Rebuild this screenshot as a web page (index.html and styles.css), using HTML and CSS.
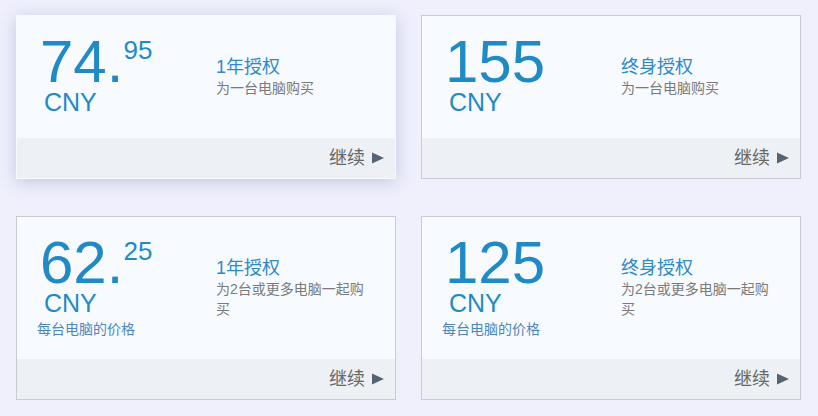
FILE: index.html
```html
<!DOCTYPE html>
<html lang="zh-CN">
<head>
<meta charset="utf-8">
<title>授权</title>
<link rel="stylesheet" href="styles.css">
</head>
<body>
<div class="grid">
  <div class="card card-active">
    <div class="main">
      <div class="price">
        <div class="amount"><span class="num">74.</span><span class="cents">95</span></div>
        <div class="cur">CNY</div>
      </div>
      <div class="desc">
        <div class="title">1年授权</div>
        <div class="sub">为一台电脑购买</div>
      </div>
    </div>
    <div class="foot"><span class="next">继续</span><svg class="tri" width="12" height="12" viewBox="0 0 12 12"><polygon points="0,0.5 12,6 0,11.5" fill="#556373"/></svg></div>
  </div>
  <div class="card">
    <div class="main">
      <div class="price">
        <div class="amount"><span class="num">155</span></div>
        <div class="cur">CNY</div>
      </div>
      <div class="desc">
        <div class="title">终身授权</div>
        <div class="sub">为一台电脑购买</div>
      </div>
    </div>
    <div class="foot"><span class="next">继续</span><svg class="tri" width="12" height="12" viewBox="0 0 12 12"><polygon points="0,0.5 12,6 0,11.5" fill="#556373"/></svg></div>
  </div>
  <div class="card">
    <div class="main">
      <div class="price">
        <div class="amount"><span class="num">62.</span><span class="cents">25</span></div>
        <div class="cur">CNY</div>
        <div class="each">每台电脑的价格</div>
      </div>
      <div class="desc">
        <div class="title">1年授权</div>
        <div class="sub">为2台或更多电脑一起购买</div>
      </div>
    </div>
    <div class="foot"><span class="next">继续</span><svg class="tri" width="12" height="12" viewBox="0 0 12 12"><polygon points="0,0.5 12,6 0,11.5" fill="#556373"/></svg></div>
  </div>
  <div class="card">
    <div class="main">
      <div class="price">
        <div class="amount"><span class="num">125</span></div>
        <div class="cur">CNY</div>
        <div class="each">每台电脑的价格</div>
      </div>
      <div class="desc">
        <div class="title">终身授权</div>
        <div class="sub">为2台或更多电脑一起购买</div>
      </div>
    </div>
    <div class="foot"><span class="next">继续</span><svg class="tri" width="12" height="12" viewBox="0 0 12 12"><polygon points="0,0.5 12,6 0,11.5" fill="#556373"/></svg></div>
  </div>
</div>
</body>
</html>
```

FILE: styles.css
```css
html, body {
  margin: 0;
  padding: 0;
  background: #eff0fc;
}
body {
  font-family: "Liberation Sans", "Noto Sans CJK SC", sans-serif;
}
.grid {
  display: grid;
  grid-template-columns: 380px 380px;
  column-gap: 25px;
  row-gap: 37px;
  padding: 15px 0 0 16px;
  align-items: stretch;
}
.card {
  display: flex;
  flex-direction: column;
  background: #f7fbff;
  border: 1px solid #c8cad4;
}
.card-active {
  border-color: #f7fbff;
  box-shadow: 0 3px 16px rgba(110, 112, 160, 0.32);
}
.main {
  flex: 1;
  display: grid;
  grid-template-columns: 179px 1fr;
  padding: 18px 20px 20px 20px;
}
.price {
  color: #1f8ac6;
}
.amount {
  display: flex;
  align-items: flex-start;
  margin-left: 3px;
}
.num {
  font-size: 60px;
  line-height: 56px;
}
.cents {
  font-size: 26px;
  line-height: 26px;
  margin-top: 3px;
}
.cur {
  font-size: 25px;
  line-height: 24px;
  margin: 0 0 4px 7px;
}
.each {
  font-size: 14px;
  line-height: 20px;
  margin-top: 1px;
  color: #4c86bb;
}
.desc {
  margin-top: 22px;
}
.title {
  font-size: 18px;
  line-height: 22px;
  color: #2f89c7;
}
.sub {
  font-size: 14px;
  line-height: 20px;
  color: #7a7a7a;
}
.foot {
  height: 40px;
  background: #edf1f5;
  display: flex;
  align-items: center;
  justify-content: flex-end;
  padding: 0 11px 0 0;
  box-sizing: border-box;
}
.next {
  font-size: 18px;
  line-height: 22px;
  color: #666;
  margin-right: 7px;
}
.tri {
  display: block;
  margin-top: 0;
}
```
